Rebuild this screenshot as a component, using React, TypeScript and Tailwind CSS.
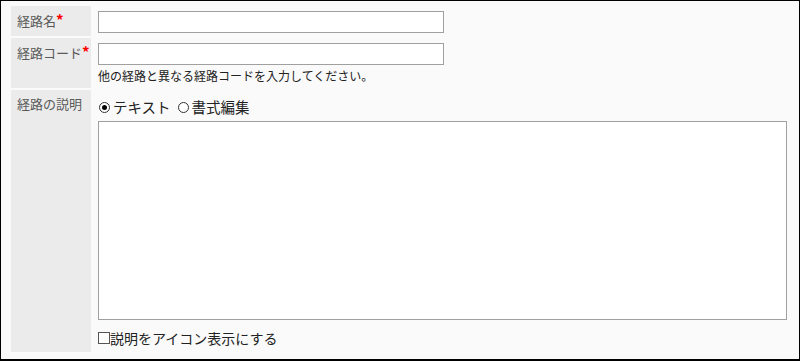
import React from 'react';

const font = { fontFamily: '"Noto Sans CJK JP", "Noto Sans", sans-serif' };

const Label = ({ text, required }: { text: string; required?: boolean }) => (
  <div className="bg-[#ebebeb] pl-[6px] pt-[5px] text-[13px] leading-[18px] text-[#5a5a5a]">
    {text}
    {required && <span className="text-[15px] font-bold text-[#ff0000]">*</span>}
  </div>
);

const Radio = ({ label, checked }: { label: string; checked?: boolean }) => (
  <label className="flex items-center">
    <span className="ml-[1px] flex h-[11px] w-[11px] items-center justify-center rounded-full border border-[#333] bg-white">
      {checked && <span className="h-[5px] w-[5px] rounded-full bg-black" />}
    </span>
    <span className="ml-[3px]">{label}</span>
  </label>
);

export default function App() {
  return (
    <div
      style={font}
      className="h-[361px] w-[800px] border border-b-2 border-black bg-[#fafafa] pl-[10px] pt-[5px] text-[#222]"
    >
      <div className="grid grid-cols-[80px_1fr] gap-[2px]">
        <Label text="経路名" required />
        <div className="h-[30px] pl-[5px] pt-[5px]">
          <input className="block h-[22px] w-[346px] border border-[#a0a0a0] bg-white" />
        </div>

        <Label text="経路コード" required />
        <div className="h-[50px] pl-[5px] pt-[5px]">
          <input className="block h-[22px] w-[346px] border border-[#a0a0a0] bg-white" />
          <div className="mt-[3px] text-[12px] leading-[16px]">
            他の経路と異なる経路コードを入力してください。
          </div>
        </div>

        <Label text="経路の説明" />
        <div className="h-[262px] pl-[5px] pt-[5px]">
          <div className="flex h-[24px] items-center gap-[6px] text-[14.5px]">
            <Radio label="テキスト" checked />
            <Radio label="書式編集" />
          </div>
          <textarea className="mt-[2px] block h-[199px] w-[689px] resize-none border border-[#a0a0a0] bg-white" />
          <label className="mt-[8px] flex items-center text-[14px] leading-[20px]">
            <span className="h-[12px] w-[12px] border border-[#555] bg-white" />
            <span>説明をアイコン表示にする</span>
          </label>
        </div>
      </div>
    </div>
  );
}
